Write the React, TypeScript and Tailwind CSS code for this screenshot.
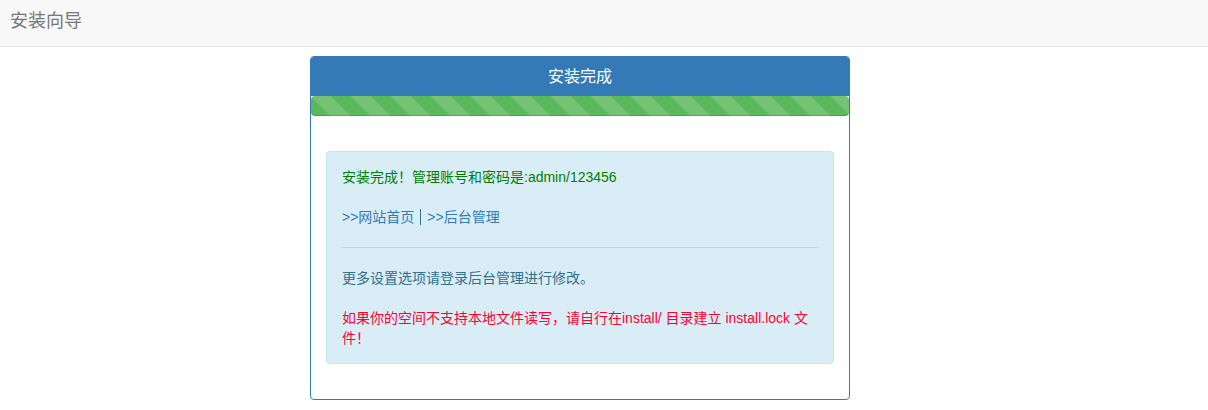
export default function App() {
  return (
    <div className="min-h-[410px] bg-white text-[14px] leading-5 text-[#333] font-['Liberation_Sans','Noto_Sans_CJK_SC',sans-serif]">
      <div className="h-[47px] bg-[#f8f8f8] border-b border-[#e7e7e7] pl-[10px] pt-[11px]">
        <span className="text-[18px] leading-5 text-[#777]">安装向导</span>
      </div>
      <div className="ml-[310px] mt-[9px] w-[540px] border border-[#337ab7] rounded-[4px] bg-white">
        <div className="h-[39px] bg-[#337ab7] rounded-t-[3px] flex items-center justify-center text-white text-[16px]">
          安装完成
        </div>
        <div className="h-[20px] rounded-[4px] bg-[#5cb85c] shadow-[inset_0_-1px_0_rgba(0,0,0,0.15)] bg-[linear-gradient(45deg,rgba(255,255,255,.15)_25%,transparent_25%,transparent_50%,rgba(255,255,255,.15)_50%,rgba(255,255,255,.15)_75%,transparent_75%,transparent)] bg-[length:40px_40px]" />
        <div className="mt-[20px] p-[15px]">
          <div className="mb-[20px] rounded-[4px] border border-[#bce8f1] bg-[#d9edf7] p-[15px] text-[#31708f]">
            <p className="text-[#008000]">安装完成！管理账号和密码是:admin/123456</p>
            <p className="mt-[20px] flex items-center">
              <a className="text-[#337ab7]">&gt;&gt;网站首页</a>
              <span className="mx-[6px] inline-block h-[16px] w-px bg-[#31708f]" />
              <a className="text-[#337ab7]">&gt;&gt;后台管理</a>
            </p>
            <div className="my-[20px] border-t border-[#a6e1ec]" />
            <p>更多设置选项请登录后台管理进行修改。</p>
            <p className="mt-[20px] text-[#ff0033]">
              如果你的空间不支持本地文件读写，请自行在install/ 目录建立 install.lock 文件！
            </p>
          </div>
        </div>
      </div>
    </div>
  );
}
